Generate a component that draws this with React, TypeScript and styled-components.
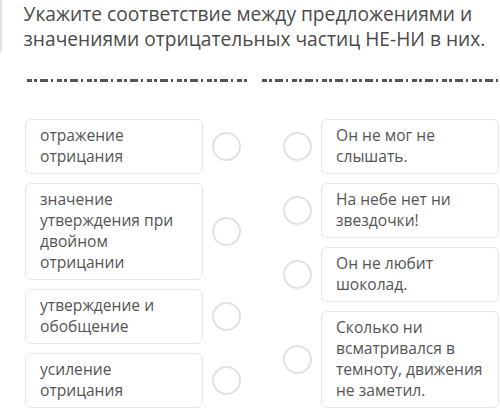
import styled, { createGlobalStyle } from "styled-components";

const GlobalStyle = createGlobalStyle`
  html, body {
    margin: 0;
    padding: 0;
    background: #ffffff;
  }
  body {
    font-family: "Open Sans", "Noto Sans", sans-serif;
    color: #4f4f4f;
  }
`;

const Page = styled.div`
  width: 500px;
  height: 419px;
  overflow: hidden;
  background: #ffffff;
`;

const Header = styled.div`
  display: flex;
  align-items: stretch;
`;

const SideBar = styled.div`
  width: 3px;
  height: 52px;
  background: #e3e3e3;
`;

const Title = styled.h1`
  margin: 0;
  padding: 1px 0 0 22px;
  font-size: 19.2px;
  line-height: 25px;
  font-weight: 400;
  color: #4a4a4a;
`;

const Divider = styled.div`
  display: flex;
  gap: 12px;
  margin: 27px 0 0 27px;
`;

const Dashes = styled.div<{ $width: number }>`
  width: ${(p) => p.$width}px;
  height: 3px;
  background: repeating-linear-gradient(
    90deg,
    #555 0 5px,
    transparent 5px 7px,
    #555 7px 10px,
    transparent 10px 13px,
    #555 13px 21px,
    transparent 21px 24px,
    #555 24px 26px,
    transparent 26px 30px
  );
`;

const Board = styled.div`
  display: flex;
  gap: 42px;
  margin: 37px 0 0 25px;
`;

const Column = styled.div`
  display: flex;
  flex-direction: column;
  gap: 9px;
`;

const Row = styled.div`
  display: flex;
  align-items: center;
  gap: 9px;
`;

const Card = styled.div`
  box-sizing: border-box;
  width: 178px;
  padding: 5px 10px 6px 14px;
  border: 1px solid #e6e6e6;
  border-radius: 6px;
  background: #ffffff;
  font-size: 15.6px;
  line-height: 21px;
  color: #555555;
`;

const Dot = styled.div`
  box-sizing: border-box;
  flex: none;
  width: 29px;
  height: 29px;
  border: 2px solid #e2e2e2;
  border-radius: 50%;
`;

const left = [
  "отражение отрицания",
  "значение утверждения при двойном отрицании",
  "утверждение и обобщение",
  "усиление отрицания",
];

const right = [
  "Он не мог не слышать.",
  "На небе нет ни звездочки!",
  "Он не любит шоколад.",
  "Сколько ни всматривался в темноту, движения не заметил.",
];

export default function App() {
  return (
    <Page>
      <GlobalStyle />
      <Header>
        <SideBar />
        <Title>
          Укажите соответствие между предложениями и значениями отрицательных
          частиц НЕ-НИ в них.
        </Title>
      </Header>
      <Divider>
        <Dashes $width={224} />
        <Dashes $width={240} />
      </Divider>
      <Board>
        <Column>
          {left.map((text) => (
            <Row key={text}>
              <Card>{text}</Card>
              <Dot />
            </Row>
          ))}
        </Column>
        <Column>
          {right.map((text) => (
            <Row key={text}>
              <Dot />
              <Card>{text}</Card>
            </Row>
          ))}
        </Column>
      </Board>
    </Page>
  );
}
